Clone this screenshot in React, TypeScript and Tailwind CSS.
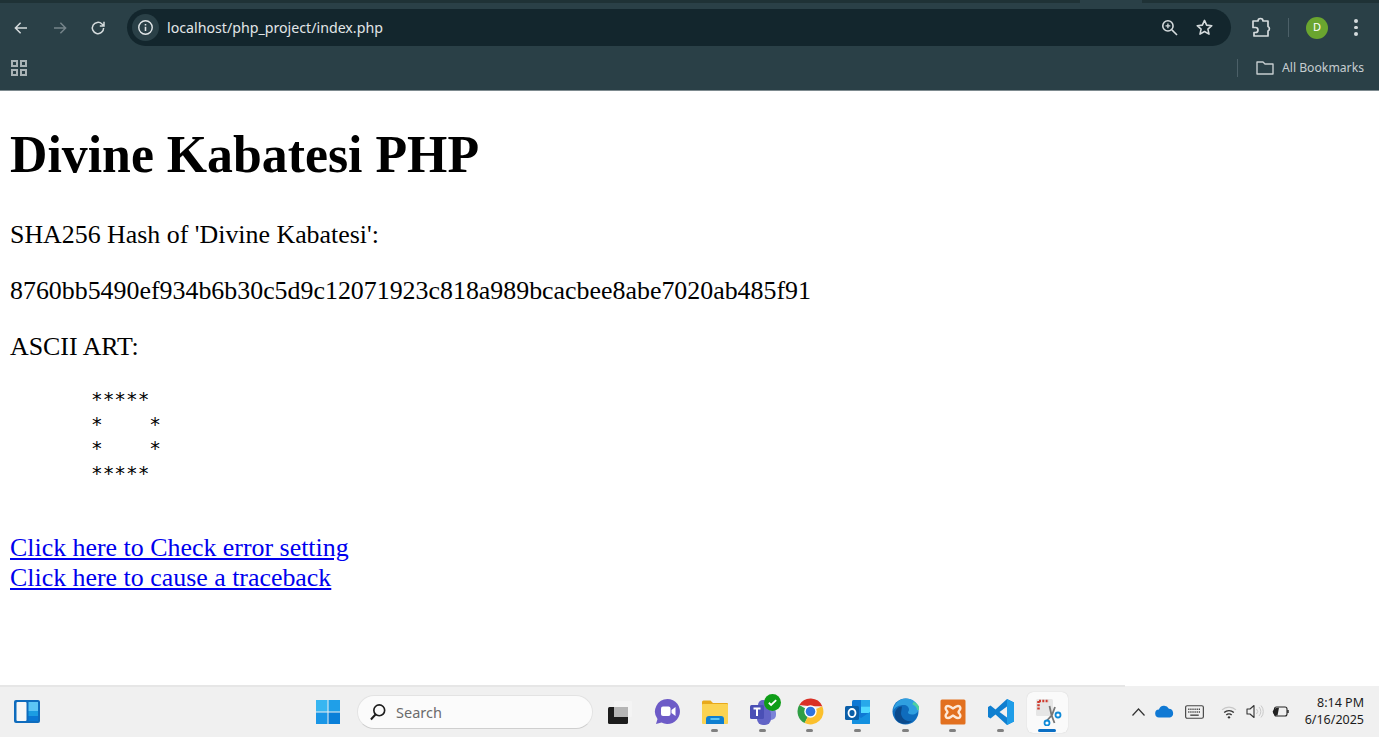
import React from "react";

const Ic = ({ w = 24, h = 24, vb = "0 0 24 24", children }: { w?: number; h?: number; vb?: string; children: React.ReactNode }) => (
  <svg width={w} height={h} viewBox={vb} fill="none" className="shrink-0 block">{children}</svg>
);

function Slot({ dot, active, children }: { dot?: boolean; active?: boolean; children: React.ReactNode }) {
  return (
    <div className="relative w-[47.6px] h-full flex items-center justify-center">
      {active && <div className="absolute left-[3px] top-[6px] w-[41px] h-[41px] rounded-md bg-[#fafafa] shadow-[0_0_1px_rgba(0,0,0,0.2)]" />}
      <div className="relative">{children}</div>
      {dot && <div className="absolute left-[20px] bottom-[5px] w-[7px] h-[3.5px] rounded-full bg-[#808080]" />}
      {active && <div className="absolute left-[14px] bottom-[5px] w-[18px] h-[3.5px] rounded-full bg-[#0b6fc4]" />}
    </div>
  );
}

export default function App() {
  return (
    <div className="w-[1379px] h-[737px] overflow-hidden flex flex-col bg-white font-['Liberation_Serif',serif] text-black">
      <header className="h-[91px] shrink-0 flex flex-col bg-[#2a4047] border-b border-[#7d8a8f] font-['Noto_Sans',sans-serif]">
        <div className="h-[3px] shrink-0 bg-[#1f3236] flex">
          <div className="w-[1080px]" />
          <div className="w-[62px] bg-[#2a4047]" />
        </div>
        <div className="h-[43px] pt-[6px] shrink-0 flex items-center">
          <div className="w-[127px] flex items-center shrink-0">
            <div className="w-[42px] flex justify-center">
              <Ic w={18} h={18}><path d="M20 12H5M11.5 5L4.5 12l7 7" stroke="#d5dbdd" strokeWidth="2" /></Ic>
            </div>
            <div className="w-[36px] flex justify-center">
              <Ic w={18} h={18}><path d="M4 12h15M12.5 5l7 7-7 7" stroke="#75848a" strokeWidth="2" /></Ic>
            </div>
            <div className="w-[40px] flex justify-center">
              <Ic w={18} h={18}><path d="M19.5 12a7.5 7.5 0 1 1-2.2-5.3L20 9.2M20 3.8v5.6h-5.6" stroke="#d5dbdd" strokeWidth="2" /></Ic>
            </div>
          </div>
          <div className="w-[1104px] h-[37px] rounded-full bg-[#13262d] flex items-center pl-[5px] shrink-0">
            <div className="w-[27px] h-[27px] rounded-full bg-[#2a4047] flex items-center justify-center">
              <Ic w={17} h={17}>
                <circle cx="12" cy="12" r="9.5" stroke="#e2e6e8" strokeWidth="2" />
                <path d="M12 11v6M12 7v2" stroke="#e2e6e8" strokeWidth="2.2" />
              </Ic>
            </div>
            <span className="ml-[8px] pt-[2px] text-[14.2px] leading-none text-[#e2e6e8] whitespace-nowrap">localhost/php_project/index.php</span>
            <div className="flex-1" />
            <Ic w={19} h={19}>
              <circle cx="10" cy="10" r="6.5" stroke="#d5dbdd" strokeWidth="2" />
              <path d="M15 15l6.5 6.5" stroke="#d5dbdd" strokeWidth="2" />
              <path d="M10 7v6M7 10h6" stroke="#d5dbdd" strokeWidth="1.7" />
            </Ic>
            <div className="w-[16px]" />
            <Ic w={19} h={19}><path d="M12 3l2.7 6 6.5.7-4.9 4.3 1.4 6.4L12 17.1 6.3 20.4l1.4-6.4-4.9-4.3 6.5-.7z" stroke="#d5dbdd" strokeWidth="2" strokeLinejoin="round" /></Ic>
            <div className="w-[17px]" />
          </div>
          <div className="w-[18px] shrink-0" />
          <Ic w={24} h={24}><path d="M4 5h5a2.5 2.5 0 0 1 5 0h5v5.5a2.5 2.5 0 0 1 0 4.5V20H5v-3.500h1.500a2.500 2.500 0 0 0 0-5H4z" stroke="#d5dbdd" strokeWidth="1.7" strokeLinejoin="round" /></Ic>
          <div className="w-[15px] shrink-0" />
          <div className="w-px h-[19px] bg-[#4c6068] shrink-0" />
          <div className="w-[17px] shrink-0" />
          <div className="w-[22px] h-[22px] shrink-0 rounded-full bg-[#6aa52f] text-white text-[11px] flex items-center justify-center">D</div>
          <div className="ml-[5px] w-[46px] flex flex-col items-center justify-center gap-[3px] shrink-0">
            <span className="w-[3.5px] h-[3.5px] rounded-full bg-[#d5dbdd]" />
            <span className="w-[3.5px] h-[3.5px] rounded-full bg-[#d5dbdd]" />
            <span className="w-[3.5px] h-[3.5px] rounded-full bg-[#d5dbdd]" />
          </div>
        </div>
        <div className="flex-1 flex items-center">
          <div className="ml-[11px] grid grid-cols-2 gap-[2px]">
            <span className="w-[7px] h-[7px] border-2 border-[#a9b3b6]" />
            <span className="w-[7px] h-[7px] border-2 border-[#a9b3b6]" />
            <span className="w-[7px] h-[7px] border-2 border-[#a9b3b6]" />
            <span className="w-[7px] h-[7px] border-2 border-[#a9b3b6]" />
          </div>
          <div className="flex-1" />
          <div className="w-px h-[18px] bg-[#4c6068]" />
          <div className="w-[18px]" />
          <Ic w={18} h={14} vb="0 0 18 14"><path d="M1 13V1h6l2 2h8v10z" stroke="#c6cdd0" strokeWidth="1.4" strokeLinejoin="round" /></Ic>
          <span className="ml-[8px] mr-[15px] text-[12.2px] leading-none text-[#c6cdd0] whitespace-nowrap">All Bookmarks</span>
        </div>
      </header>

      <main className="flex-1 min-h-0 px-[10px]">
        <h1 className="mt-[33px] text-[51.8px] leading-[62px] font-bold whitespace-nowrap">Divine Kabatesi PHP</h1>
        <p className="mt-[34px] text-[25.9px] leading-[30px]">SHA256 Hash of 'Divine Kabatesi':</p>
        <p className="mt-[26px] text-[25.9px] leading-[30px]">8760bb5490ef934b6b30c5d9c12071923c818a989bcacbee8abe7020ab485f91</p>
        <p className="mt-[26px] text-[25.9px] leading-[30px]">ASCII ART:</p>
        <pre className="mt-[26px] ml-[81px] font-['DejaVu_Sans_Mono',monospace] text-[19.4px] leading-[24.5px]">{"*****\n*    *\n*    *\n*****"}</pre>
        <div className="mt-[47px] text-[25.9px] leading-[30px]">
          <a href="#" className="block w-fit text-[#0000ee] underline">Click here to Check error setting</a>
          <a href="#" className="block w-fit text-[#0000ee] underline">Click here to cause a traceback</a>
        </div>
      </main>

      <footer className="relative h-[51px] shrink-0 flex bg-[#f0f0f0] font-['Noto_Sans',sans-serif]">
        <div className="absolute left-0 top-[-1px] w-[1125px] h-[2px] bg-[#e6e6e6]" />
        <div className="w-[315px] flex items-center pl-[13px] shrink-0">
          <Ic w={28} h={25} vb="0 0 28 25">
            <rect x="1" y="1" width="26" height="23" rx="2" fill="#0f6cbd" />
            <rect x="3.5" y="3" width="10" height="19" rx="1" fill="#f7f7f7" />
            <rect x="15.5" y="3" width="9.5" height="9" fill="#5cc5f5" />
            <rect x="15.5" y="12" width="9.5" height="5" fill="#1b9de2" />
            <rect x="15.5" y="17" width="9.5" height="5" fill="#0a78d4" />
          </Ic>
        </div>
        <div className="w-[42px] flex items-center shrink-0">
          <Ic w={26} h={26} vb="0 0 26 26">
            <rect x="1" y="1" width="11.5" height="11.5" fill="#38b6f1" />
            <rect x="13.5" y="1" width="11.5" height="11.5" fill="#1f9fe8" />
            <rect x="1" y="13.5" width="11.5" height="11.5" fill="#1a96e6" />
            <rect x="13.5" y="13.5" width="11.5" height="11.5" fill="#0a7fd8" />
          </Ic>
        </div>
        <div className="w-[236px] h-[34px] mt-[9px] mr-[3px] rounded-full bg-[#fbfbfb] border border-[#e3e3e3] border-b-[#cfcfcf] flex items-center pl-[10px] shrink-0">
          <Ic w={20} h={20}><circle cx="13.5" cy="10" r="6.5" stroke="#1e1e1e" strokeWidth="2" /><path d="M9 15l-5.500 6" stroke="#1e1e1e" strokeWidth="2.4" /></Ic>
          <span className="ml-[8px] text-[14.5px] leading-none text-[#6b6b6b]">Search</span>
        </div>
        <div className="flex items-stretch shrink-0">
          <Slot>
            <Ic w={26} h={26} vb="0 0 26 26">
              <rect x="1" y="8" width="20" height="17" rx="1.5" fill="#1c1c1c" />
              <rect x="7" y="2" width="18" height="16" rx="1" fill="#f4f4f4" />
              <rect x="7" y="8" width="14" height="10" fill="#b5b5b5" />
            </Ic>
          </Slot>
          <Slot>
            <Ic w={27} h={27} vb="0 0 27 27">
              <path d="M13.5 1a12.5 12.5 0 1 1-6 23.500L2 26l1.500-5A12.500 12.500 0 0 1 13.500 1z" fill="#6d5bc7" />
              <rect x="7" y="8.500" width="9.500" height="9.500" rx="2" fill="#fff" />
              <path d="M17.500 12l4-3v9l-4-3z" fill="#fff" />
            </Ic>
          </Slot>
          <Slot dot>
            <Ic w={28} h={26} vb="0 0 28 26">
              <path d="M1 3a1.500 1.500 0 0 1 1.500-1.500h7L12 4h14a1 1 0 0 1 1 1v3H1z" fill="#e8a91c" />
              <rect x="1" y="5" width="26" height="20" rx="1" fill="#fbd352" />
              <path d="M5 25v-5a3 3 0 0 1 3-3h12a3 3 0 0 1 3 3v5z" fill="#0f7fd0" />
              <rect x="9.500" y="19" width="9" height="2" fill="#5cc5f5" />
            </Ic>
          </Slot>
          <Slot dot>
            <div className="relative w-[28px] h-[26px]">
              <Ic w={28} h={26} vb="0 0 28 26">
                <circle cx="21" cy="8" r="4" fill="#7b83d8" />
                <rect x="15" y="9" width="12" height="12" rx="5" fill="#7b83d8" />
                <circle cx="14" cy="6" r="5" fill="#6264c6" />
                <rect x="8" y="9" width="14" height="17" rx="6" fill="#6264c6" />
                <rect x="1" y="6" width="14" height="14" rx="1.500" fill="#4a4fb5" />
                <path d="M4.500 9.500h7M8 9.500v7.500" stroke="#fff" strokeWidth="2" />
              </Ic>
              <div className="absolute left-[15px] top-[-5px] w-[17px] h-[17px] rounded-full bg-[#0f9d18] flex items-center justify-center">
                <Ic w={11} h={11}><path d="M4 12.500l5 5L20 7" stroke="#fff" strokeWidth="4" /></Ic>
              </div>
            </div>
          </Slot>
          <Slot dot>
            <Ic w={27} h={27} vb="0 0 48 48">
              <path d="M24 24L13.600 44.500A23 23 0 0 1 4 12.500z" fill="#2f9e44" />
              <path d="M24 24l20.900-9.500A23 23 0 0 1 13.600 44.500z" fill="#fbc02d" />
              <path d="M4 12.500A23 23 0 0 1 45 14.500H24z" fill="#d93025" />
              <circle cx="24" cy="24" r="11" fill="#fff" />
              <circle cx="24" cy="24" r="8.500" fill="#2f74e0" />
            </Ic>
          </Slot>
          <Slot dot>
            <Ic w={27} h={26} vb="0 0 27 26">
              <rect x="8" y="1" width="18" height="24" rx="1.500" fill="#0f78d4" />
              <rect x="17" y="1" width="9" height="6.500" fill="#28a8ea" />
              <rect x="17" y="7.500" width="9" height="6.500" fill="#50d9ff" />
              <path d="M8 13l9 6 9-6v11a1 1 0 0 1-1 1H9a1 1 0 0 1-1-1z" fill="#1490df" />
              <rect x="1" y="7" width="14" height="14" rx="1.500" fill="#0a5ea8" />
              <ellipse cx="8" cy="14" rx="3.500" ry="4" stroke="#fff" strokeWidth="1.800" />
            </Ic>
          </Slot>
          <Slot dot>
            <Ic w={27} h={27} vb="0 0 27 27">
              <circle cx="13.500" cy="13.500" r="13" fill="#0f6cbd" />
              <path d="M1 13C2 5 8 .5 14 .5c7 0 12.500 5 12.500 10.500 0 3.500-3 5.500-6.500 5.500-2.500 0-4-.8-4-2 0-1 1-1.200 1-3 0-2.500-2.500-4.500-5-4.500C7 7 3 9 1 13z" fill="#2f9fe0" />
              <path d="M9 15c0 5 5 9.500 11 8-3 3-9 4-13.500 1C3 21.500 2 17 3.500 13c1-2.500 3.500-4.500 6.500-4.500z" fill="#0b4a8c" />
              <path d="M21 5c3 1.500 5.500 4 5.500 7" stroke="#4fd1a0" strokeWidth="3" />
            </Ic>
          </Slot>
          <Slot dot>
            <Ic w={26} h={26} vb="0 0 26 26">
              <rect x="0.500" y="0.500" width="25" height="25" rx="1.500" fill="#e2701f" />
              <path d="M8 7c2 0 3 1.500 5 2.500C15 8.500 16 7 18 7c2.500 0 3 2.500 1.700 4-.7.800-1.200 1.300-1.200 2s.5 1.200 1.200 2c1.300 1.500.8 4-1.700 4-2 0-3-1.500-5-2.500C11 17.500 10 19 8 19c-2.500 0-3-2.500-1.700-4 .7-.8 1.200-1.300 1.200-2s-.5-1.200-1.200-2C5 9.500 5.500 7 8 7z" stroke="#fde9d8" strokeWidth="2.400" />
            </Ic>
          </Slot>
          <Slot dot>
            <Ic w={28} h={28} vb="0 0 28 28">
              <path d="M20 1l7 3.500v19L20 27 8.500 16.500 3.500 20.500 1 19v-10l2.500-1.500 5 4z" fill="#0f7fd0" />
              <path d="M20 8.500L12.500 14l7.500 5.500z" fill="#f0f0f0" />
              <path d="M20 1l7 3.500v19L20 27z" fill="#1f9de8" />
            </Ic>
          </Slot>
          <Slot active>
            <Ic w={28} h={28} vb="0 0 28 28">
              <rect x="2" y="1" width="17" height="17" rx="1.500" fill="#e6e6e6" />
              <path d="M5 3h10M4.500 3v9" stroke="#cf3b2e" strokeWidth="2.500" strokeDasharray="2 1.300" />
              <path d="M15.500 8l2 9 3 8M21 9l-3 8-5.500 6" stroke="#777" strokeWidth="1.800" />
              <circle cx="24" cy="17" r="2.500" stroke="#0f8ad8" strokeWidth="1.800" fill="#fff" />
              <circle cx="13" cy="25" r="2.500" stroke="#0f8ad8" strokeWidth="1.800" fill="#fff" />
            </Ic>
          </Slot>
        </div>
        <div className="flex-1 flex items-center min-w-0">
          <div className="ml-[59px]" />
          <Ic w={15} h={10} vb="0 0 15 10"><path d="M1.500 8.500L7.500 2l6 6.500" stroke="#333" strokeWidth="1.200" /></Ic>
          <div className="w-[9px]" />
          <Ic w={19} h={13} vb="0 0 19 13"><path d="M4.500 12.500a4 4 0 0 1-.6-8 5.500 5.500 0 0 1 10-.8 4.500 4.500 0 0 1 1 8.800z" fill="#1079d4" /></Ic>
          <div className="w-[11px]" />
          <Ic w={19} h={14} vb="0 0 18 13"><rect x=".6" y=".6" width="16.800" height="11.800" rx="1.500" stroke="#444" strokeWidth="1.100" /><path d="M3 4h12M3 6.500h12" stroke="#444" strokeWidth="1.400" strokeDasharray="1.200 .8" /><path d="M5 9.500h8" stroke="#444" strokeWidth="1.300" /></Ic>
          <div className="w-[17px]" />
          <Ic w={16} h={14} vb="0 0 15 13"><path d="M1 4.500a9.500 9.500 0 0 1 13 0" stroke="#c8c8c8" strokeWidth="1.200" /><path d="M3 7a6.500 6.500 0 0 1 9 0M5 9.300a3.500 3.500 0 0 1 5 0" stroke="#333" strokeWidth="1.300" /><circle cx="7.500" cy="11.500" r="1.100" fill="#333" /></Ic>
          <div className="w-[9px]" />
          <Ic w={18} h={15} vb="0 0 18 15"><path d="M1 5h3l4-3.500v12L4 10H1z" stroke="#333" strokeWidth="1.100" strokeLinejoin="round" /><path d="M10.500 5a3.500 3.500 0 0 1 0 5M13 3a6.500 6.500 0 0 1 0 9M15 1.500a9 9 0 0 1 0 12" stroke="#c8c8c8" strokeWidth="1" /></Ic>
          <div className="w-[8px]" />
          <Ic w={18} h={13} vb="0 0 18 13"><rect x="2.500" y="2" width="12.500" height="9" rx="2" stroke="#222" strokeWidth="1.100" /><path d="M16 5v3" stroke="#222" strokeWidth="1.400" /><path d="M.8 6.500C1.500 3.500 4 2.500 7 2.800L5.500 10.500C2.500 10.500 .8 9 .8 6.500z" fill="#222" /></Ic>
          <div className="flex-1" />
          <div className="mr-[15px] text-right text-[12.5px] leading-[16.5px] text-[#1c1c1c] whitespace-nowrap">
            <div>8:14 PM</div>
            <div>6/16/2025</div>
          </div>
        </div>
      </footer>
    </div>
  );
}
